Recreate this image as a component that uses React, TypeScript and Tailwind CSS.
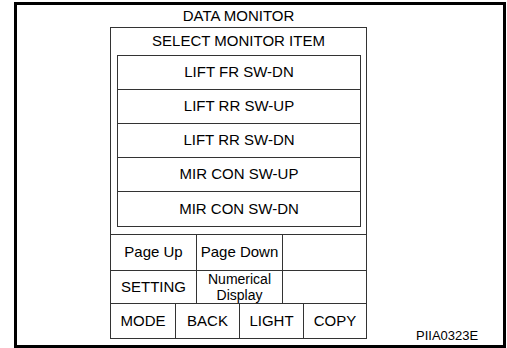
import React from 'react';

const ITEMS = ['LIFT FR SW-DN', 'LIFT RR SW-UP', 'LIFT RR SW-DN', 'MIR CON SW-UP', 'MIR CON SW-DN'];

export default function App() {
  return (
    <div className="w-[507px] h-[348px] bg-white pt-[2px] pl-[14px] text-black font-['Liberation_Sans',Arial,sans-serif]">
      <div className="w-[492px] h-[346px] border-[3px] border-black flex">
        <div className="ml-[93px] w-[257px] flex flex-col">
          <div className="h-[22px] flex items-center justify-center text-[15px]">DATA MONITOR</div>

          <div className="w-[257px] h-[312px] border border-[#333] flex flex-col">
            <div className="h-[27px] flex items-center justify-center text-[15px]">SELECT MONITOR ITEM</div>

            <div className="ml-[6px] w-[244px] border border-[#333] flex flex-col divide-y divide-[#333]">
              {ITEMS.map((item) => (
                <div key={item} className="h-[34px] flex items-center justify-center text-[15px]">
                  {item}
                </div>
              ))}
            </div>

            <div className="mt-[7px] border-t border-[#333] flex flex-col flex-1 text-[15px]">
              <div className="h-[36px] flex border-b border-[#333]">
                <div className="w-[86px] border-r border-[#333] flex items-center justify-center">Page Up</div>
                <div className="w-[86px] border-r border-[#333] flex items-center justify-center">Page Down</div>
                <div className="flex-1" />
              </div>
              <div className="h-[33px] flex border-b border-[#333]">
                <div className="w-[86px] border-r border-[#333] flex items-center justify-center">SETTING</div>
                <div className="w-[86px] border-r border-[#333] flex flex-col items-center justify-center text-[14px] leading-[16px]">
                  <span>Numerical</span>
                  <span>Display</span>
                </div>
                <div className="flex-1" />
              </div>
              <div className="flex-1 flex">
                <div className="w-[65px] border-r border-[#333] flex items-center justify-center">MODE</div>
                <div className="w-[64px] border-r border-[#333] flex items-center justify-center">BACK</div>
                <div className="w-[64px] border-r border-[#333] flex items-center justify-center">LIGHT</div>
                <div className="flex-1 flex items-center justify-center">COPY</div>
              </div>
            </div>
          </div>
        </div>

        <div className="self-end ml-[49px] mb-[1px] text-[13px] leading-[16px]">PIIA0323E</div>
      </div>
    </div>
  );
}
